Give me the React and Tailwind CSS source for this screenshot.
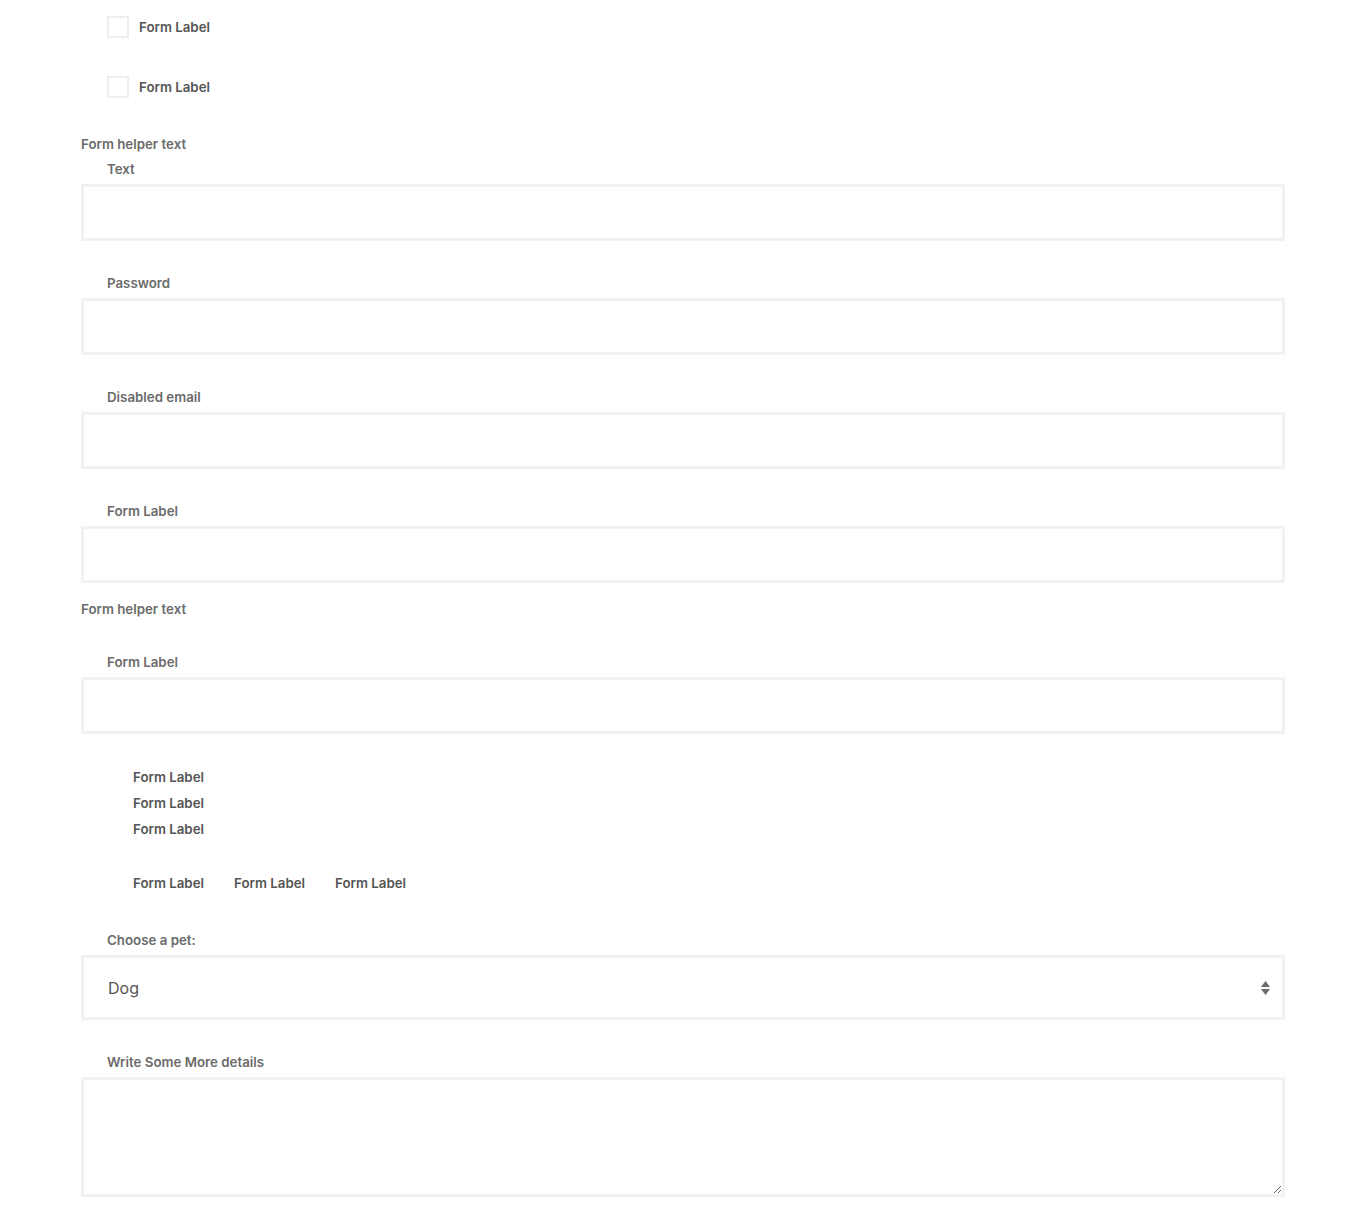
import { useState } from 'react'

const font = { fontFamily: 'Inter, "Noto Sans", sans-serif' }

function Field({ label, type = 'text', disabled, className = '' }) {
  return (
    <div className={className}>
      <label className="block pl-[26px] mb-[5px] text-[13.3px] leading-[20px] font-semibold text-[#6b6b6b]">{label}</label>
      <input
        type={type}
        disabled={disabled}
        className="block w-full h-[57px] border-[3px] border-[#f2f2f2] bg-white outline-none"
      />
    </div>
  )
}

export default function App() {
  const [pet, setPet] = useState('dog')

  return (
    <div style={font} className="min-h-screen bg-white">
      <div className="w-[1204px] mx-auto pt-[16px] pb-[10px]">
        {/* checkboxes */}
        <div className="pl-[26px]">
          <label className="flex items-center gap-[10px] h-[22px]">
            <span className="w-[22px] h-[22px] border-2 border-[#eeeeee] bg-white" />
            <span className="mt-[2px] text-[13.3px] font-semibold text-[#555]">Form Label</span>
          </label>
          <label className="flex items-center gap-[10px] h-[22px] mt-[38px]">
            <span className="w-[22px] h-[22px] border-2 border-[#eeeeee] bg-white" />
            <span className="mt-[2px] text-[13.3px] font-semibold text-[#555]">Form Label</span>
          </label>
        </div>

        <p className="mt-[36px] text-[13.3px] leading-[20px] font-semibold text-[#6b6b6b]">Form helper text</p>
        <Field label="Text" className="mt-[5px]" />
        <Field label="Password" type="password" className="mt-[32px]" />
        <Field label="Disabled email" type="email" disabled className="mt-[32px]" />
        <Field label="Form Label" className="mt-[32px]" />
        <p className="mt-[16px] text-[13.3px] leading-[20px] font-semibold text-[#6b6b6b]">Form helper text</p>
        <Field label="Form Label" className="mt-[33px]" />

        {/* radio list */}
        <div className="mt-[33px] pl-[52px] flex flex-col gap-[6px]">
          <span className="text-[13.3px] leading-[20px] font-semibold text-[#555]">Form Label</span>
          <span className="text-[13.3px] leading-[20px] font-semibold text-[#555]">Form Label</span>
          <span className="text-[13.3px] leading-[20px] font-semibold text-[#555]">Form Label</span>
        </div>

        <div className="mt-[34px] pl-[52px] flex gap-[30px]">
          <span className="text-[13.3px] leading-[20px] font-semibold text-[#555]">Form Label</span>
          <span className="text-[13.3px] leading-[20px] font-semibold text-[#555]">Form Label</span>
          <span className="text-[13.3px] leading-[20px] font-semibold text-[#555]">Form Label</span>
        </div>

        {/* select */}
        <div className="mt-[37px]">
          <label className="block pl-[26px] mb-[5px] text-[13.3px] leading-[20px] font-semibold text-[#6b6b6b]">Choose a pet:</label>
          <div className="relative">
            <select
              value={pet}
              onChange={(e) => setPet(e.target.value)}
              className="block w-full h-[65px] appearance-none border-[3px] border-[#f2f2f2] bg-white pl-[24px] text-[16px] text-[#555] outline-none"
            >
              <option value="dog">Dog</option>
              <option value="cat">Cat</option>
            </select>
            <svg className="absolute right-[14px] top-[25px] pointer-events-none" width="11" height="16" viewBox="0 0 11 16">
              <path d="M5.5 1 L10 7 H1 Z" fill="#6b6b6b" />
              <path d="M1 9 H10 L5.5 15 Z" fill="#6b6b6b" />
            </svg>
          </div>
        </div>

        {/* textarea */}
        <div className="mt-[32px]">
          <label className="block pl-[26px] mb-[5px] text-[13.3px] leading-[20px] font-semibold text-[#6b6b6b]">Write Some More details</label>
          <textarea className="block w-full h-[120px] border-[3px] border-[#f2f2f2] bg-white outline-none" />
        </div>
      </div>
    </div>
  )
}
